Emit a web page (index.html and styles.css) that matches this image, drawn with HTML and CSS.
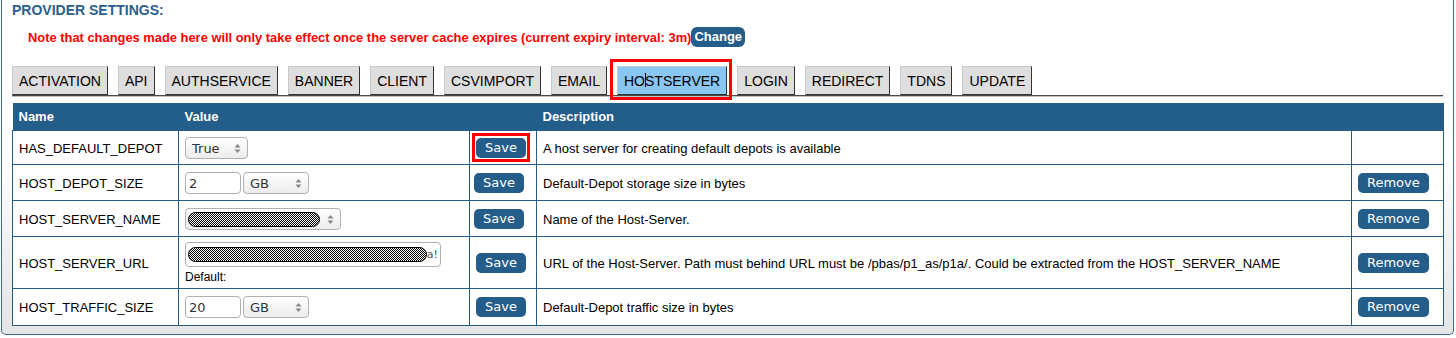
FILE: index.html
```html
<!DOCTYPE html>
<html lang="en">
<head>
  <meta charset="UTF-8" />
  <title>Provider Settings</title>
  <link rel="stylesheet" href="styles.css">
</head>
<body>
  <div class="panel">
    <h2 class="title">PROVIDER SETTINGS:</h2>
    <div class="note">
      <span>Note that changes made here will only take effect once the server cache expires (current expiry interval: 3m)</span>
      <button class="btn btn-change">Change</button>
    </div>

    <div class="tabs">
      <button class="tab">ACTIVATION</button>
      <button class="tab">API</button>
      <button class="tab">AUTHSERVICE</button>
      <button class="tab">BANNER</button>
      <button class="tab">CLIENT</button>
      <button class="tab">CSVIMPORT</button>
      <button class="tab">EMAIL</button>
      <button class="tab active">HO<span class="caret"></span>STSERVER<span class="mark mark-tab"></span></button>
      <button class="tab">LOGIN</button>
      <button class="tab">REDIRECT</button>
      <button class="tab">TDNS</button>
      <button class="tab">UPDATE</button>
    </div>

    <table class="settings">
      <colgroup>
        <col class="c-name">
        <col class="c-value">
        <col class="c-save">
        <col class="c-desc">
        <col class="c-remove">
      </colgroup>
      <thead>
        <tr>
          <th>Name</th>
          <th colspan="2">Value</th>
          <th>Description</th>
          <th></th>
        </tr>
      </thead>
      <tbody>
        <tr class="first">
          <td>HAS_DEFAULT_DEPOT</td>
          <td>
            <span class="select w-bool">True<svg class="arrows" width="7" height="11" viewBox="0 0 7 11"><path d="M0.5 4.5 3.5 1 6.5 4.5Z M0.5 6.5 3.5 10 6.5 6.5Z"/></svg></span>
          </td>
          <td class="save-cell"><button class="btn">Save<span class="mark mark-save"></span></button></td>
          <td>A host server for creating default depots is available</td>
          <td></td>
        </tr>
        <tr>
          <td>HOST_DEPOT_SIZE</td>
          <td>
            <span class="field">
              <span class="input w-num">2</span>
              <span class="select w-unit">GB<svg class="arrows" width="7" height="11" viewBox="0 0 7 11"><path d="M0.5 4.5 3.5 1 6.5 4.5Z M0.5 6.5 3.5 10 6.5 6.5Z"/></svg></span>
            </span>
          </td>
          <td class="save-cell"><button class="btn">Save</button></td>
          <td>Default-Depot storage size in bytes</td>
          <td><button class="btn">Remove</button></td>
        </tr>
        <tr>
          <td>HOST_SERVER_NAME</td>
          <td>
            <span class="select w-name"><span class="redact redact-name"></span><svg class="arrows" width="7" height="11" viewBox="0 0 7 11"><path d="M0.5 4.5 3.5 1 6.5 4.5Z M0.5 6.5 3.5 10 6.5 6.5Z"/></svg></span>
          </td>
          <td class="save-cell"><button class="btn">Save</button></td>
          <td>Name of the Host-Server.</td>
          <td><button class="btn">Remove</button></td>
        </tr>
        <tr class="tall">
          <td>HOST_SERVER_URL</td>
          <td>
            <span class="input w-url"><span class="redact redact-url"></span><span class="tail">a!</span></span>
            <div class="default">Default:</div>
          </td>
          <td class="save-cell"><button class="btn">Save</button></td>
          <td>URL of the Host-Server. Path must behind URL must be /pbas/p1_as/p1a/. Could be extracted from the HOST_SERVER_NAME</td>
          <td><button class="btn">Remove</button></td>
        </tr>
        <tr class="last">
          <td>HOST_TRAFFIC_SIZE</td>
          <td>
            <span class="field">
              <span class="input w-num">20</span>
              <span class="select w-unit">GB<svg class="arrows" width="7" height="11" viewBox="0 0 7 11"><path d="M0.5 4.5 3.5 1 6.5 4.5Z M0.5 6.5 3.5 10 6.5 6.5Z"/></svg></span>
            </span>
          </td>
          <td class="save-cell"><button class="btn">Save</button></td>
          <td>Default-Depot traffic size in bytes</td>
          <td><button class="btn">Remove</button></td>
        </tr>
      </tbody>
    </table>
  </div>
</body>
</html>
```

FILE: styles.css
```css
body {
  margin: 0;
  font-family: "Liberation Sans", Arial, sans-serif;
  color: #000;
  background: #fff;
}

.panel {
  margin: 0 2px 0 1px;
  padding: 2px 10px 8px;
  border: 1px solid #3d6b93;
  border-top: none;
  border-radius: 0 0 5px 5px;
  background: linear-gradient(#fff 45%, #e4e4e4);
}

.title {
  margin: 0;
  font-size: 14px;
  line-height: 16px;
  font-weight: bold;
  color: #2b5f8c;
}

.note {
  display: flex;
  align-items: center;
  margin: 9px 0 0 16px;
  color: #f00;
  font-size: 12.9px;
  font-weight: bold;
}

.btn {
  position: relative;
  height: 20px;
  padding: 0 9px;
  border: none;
  border-radius: 5px;
  background: #245d8a;
  color: #fff;
  font-family: "DejaVu Sans", sans-serif;
  font-size: 13px;
  line-height: 20px;
  vertical-align: middle;
  cursor: pointer;
}

.btn-change {
  padding: 0 3px;
  border-radius: 6px;
  font-family: "Liberation Sans", Arial, sans-serif;
  font-weight: bold;
}

/* tab strip */
.tabs {
  display: flex;
  gap: 10px;
  margin-top: 19px;
  border-bottom: 1px solid #4a4a4a;
  box-shadow: 0 1px 0 #c4c4c4;
}

.tab {
  position: relative;
  height: 29px;
  padding: 0 6px;
  border: 1px solid;
  border-color: #c9c9c9 #333 #333 #c9c9c9;
  background: #dedede;
  color: #000;
  font-family: "Liberation Sans", Arial, sans-serif;
  font-size: 14px;
}

.tab.active {
  background: #8ac6f2;
}

.caret {
  position: absolute;
  top: 6px;
  width: 1px;
  height: 14px;
  background: #000;
}

/* red annotation boxes */
.mark {
  position: absolute;
  border: 3px solid #f00;
  pointer-events: none;
}

.mark-tab {
  top: -8px;
  left: -8px;
  right: -6px;
  bottom: -6px;
}

.mark-save {
  top: -5px;
  left: -4px;
  right: -4px;
  bottom: -4px;
}

/* settings table */
.settings {
  width: 1431px;
  margin-top: 7px;
  border-collapse: collapse;
  table-layout: fixed;
  background: #fff;
  font-size: 13px;
}

.c-name { width: 166px; }
.c-value { width: 291px; }
.c-save { width: 67px; }
.c-desc { width: 815px; }
.c-remove { width: 92px; }

.settings th {
  height: 27px;
  padding: 0 6px;
  background: #235d89;
  color: #fff;
  font-weight: bold;
  text-align: left;
}

.settings td {
  height: 22px;
  padding: 7px 6px 6px;
  border: 1px solid #245d8a;
  vertical-align: middle;
  line-height: 15px;
}

.settings tr.first td {
  padding: 6px 6px 5px;
}

.settings tr.last td {
  padding: 7px 6px;
}

.settings tr.tall td {
  padding: 5px 6px 4px;
}

.settings td.save-cell {
  padding-left: 4px;
}

/* form controls */
.field {
  display: flex;
  gap: 2px;
}

.select,
.input {
  display: flex;
  align-items: center;
  box-sizing: border-box;
  height: 22px;
  border: 1px solid #b0b0b0;
  border-radius: 4px;
  font-family: "DejaVu Sans", sans-serif;
  font-size: 13px;
  color: #333;
}

.select {
  justify-content: space-between;
  padding: 0 6px 0 6px;
  background: linear-gradient(#fff, #ececec);
}

.input {
  padding: 0 3px;
  background: #fff;
}

.arrows {
  fill: #888;
}

.w-bool { width: 63px; }
.w-num { width: 56px; }
.w-unit { width: 66px; }
.w-name { width: 156px; padding-left: 2px; }

.w-url {
  width: 256px;
  height: 25px;
  margin-bottom: 3px;
  padding: 0 2px;
  gap: 0;
}

.redact {
  display: block;
  box-sizing: border-box;
  height: 15px;
  border: 1px solid #000;
  border-radius: 8px;
  background: repeating-conic-gradient(#000 0 25%, #fff 0 50%) 0 0 / 2px 2px;
}

.redact-name { width: 132px; }
.redact-url { width: 244px; }

.tail {
  font-size: 11px;
  color: #555;
}

.default {
  font-size: 12px;
  line-height: 14px;
}
```
